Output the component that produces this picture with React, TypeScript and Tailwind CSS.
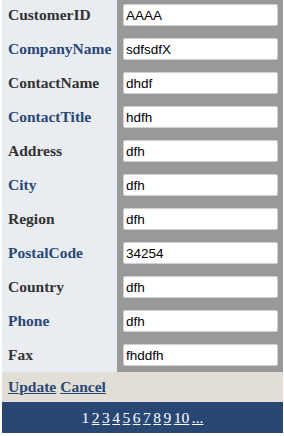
import React from 'react';

const fields: { label: string; value: string }[] = [
  { label: 'CustomerID', value: 'AAAA' },
  { label: 'CompanyName', value: 'sdfsdfX' },
  { label: 'ContactName', value: 'dhdf' },
  { label: 'ContactTitle', value: 'hdfh' },
  { label: 'Address', value: 'dfh' },
  { label: 'City', value: 'dfh' },
  { label: 'Region', value: 'dfh' },
  { label: 'PostalCode', value: '34254' },
  { label: 'Country', value: 'dfh' },
  { label: 'Phone', value: 'dfh' },
  { label: 'Fax', value: 'fhddfh' },
];

const pages = ['2', '3', '4', '5', '6', '7', '8', '9', '10', '...'];

export default function App() {
  return (
    <div className="w-[284px] h-[436px] bg-white overflow-hidden font-['Liberation_Serif','Times_New_Roman',serif]">
      <div className="ml-[2px] w-[281px] -mt-[2px]">
        {/* Field rows */}
        {fields.map((f, i) => (
          <div key={f.label} className="flex h-[34px]">
            <div
              className={
                i % 2 === 0
                  ? 'w-[115px] bg-[#e9ecf1] flex items-center pl-[6px] text-[15.5px] font-bold text-[#333333]'
                  : 'w-[115px] bg-[#e9ecf1] flex items-center pl-[6px] text-[15.5px] font-bold text-[#284775]'
              }
            >
              {f.label}
            </div>
            <div className="flex-1 bg-[#999999] flex items-center pl-[6px] pr-[5px]">
              <input
                defaultValue={f.value}
                className="w-full h-[22px] border border-[#d0d0d0] rounded-[2px] bg-white px-[2px] text-[13.5px] text-black outline-none font-['Liberation_Sans',Arial,sans-serif]"
              />
            </div>
          </div>
        ))}

        {/* Command row */}
        <div className="h-[30px] bg-[#e2ded6] flex items-center gap-[4px] pl-[6px] text-[15.5px] font-bold text-[#284775]">
          <a href="#" className="underline">Update</a>
          <a href="#" className="underline">Cancel</a>
        </div>

        {/* Pager */}
        <div className="h-[31px] bg-[#284775] flex items-center justify-center gap-[2.5px] text-[15.5px] text-white">
          <span>1</span>
          {pages.map((p) => (
            <a key={p} href="#" className="underline">
              {p}
            </a>
          ))}
        </div>
      </div>
    </div>
  );
}
